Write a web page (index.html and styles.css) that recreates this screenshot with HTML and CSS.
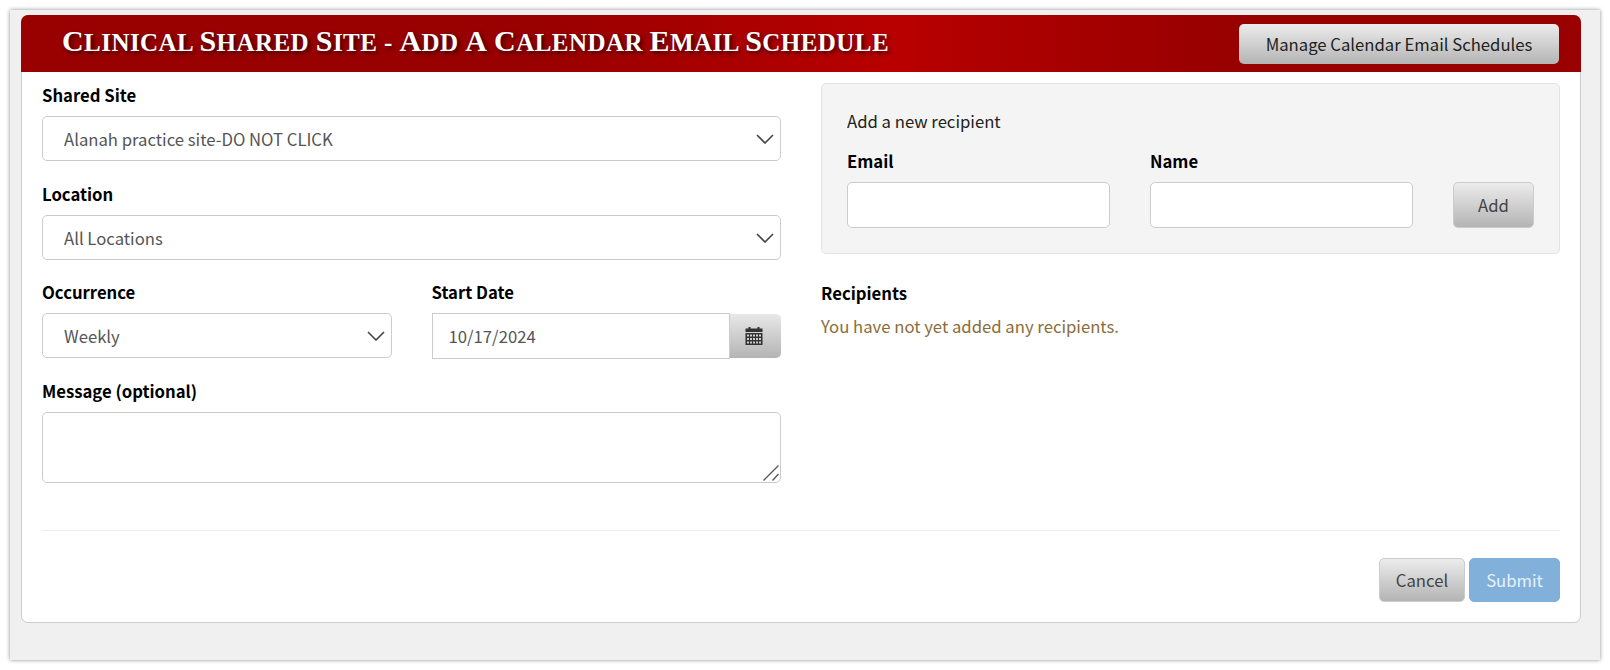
FILE: index.html
```html
<!DOCTYPE html>
<html lang="en">
<head>
    <meta charset="UTF-8">
    <title>Clinical Shared Site - Add A Calendar Email Schedule</title>
    <link rel="stylesheet" href="styles.css">
</head>
<body>
    <div class="frame">
        <div class="panel">
            <div class="panel-head">
                <h1><span class="cap">C</span>linical <span class="cap">S</span>hared <span class="cap">S</span>ite - <span class="cap">A</span>dd <span class="cap">A</span> <span class="cap">C</span>alendar <span class="cap">E</span>mail <span class="cap">S</span>chedule</h1>
                <button class="btn btn-manage" type="button">Manage Calendar Email Schedules</button>
            </div>
            <div class="panel-body">
                <div class="columns">
                    <div class="col">
                        <div class="field">
                            <label>Shared Site</label>
                            <div class="select-wrap">
                                <select><option>Alanah practice site-DO NOT CLICK</option></select>
                                <svg class="chevron" viewBox="0 0 18 10"><path d="M1 1l8 8 8-8"/></svg>
                            </div>
                        </div>
                        <div class="field">
                            <label>Location</label>
                            <div class="select-wrap">
                                <select><option>All Locations</option></select>
                                <svg class="chevron" viewBox="0 0 18 10"><path d="M1 1l8 8 8-8"/></svg>
                            </div>
                        </div>
                        <div class="field-row">
                            <div class="field">
                                <label>Occurrence</label>
                                <div class="select-wrap">
                                    <select><option>Weekly</option></select>
                                    <svg class="chevron" viewBox="0 0 18 10"><path d="M1 1l8 8 8-8"/></svg>
                                </div>
                            </div>
                            <div class="field">
                                <label>Start Date</label>
                                <div class="date-group">
                                    <input class="date-input" type="text" value="10/17/2024">
                                    <span class="date-addon">
                                        <svg class="calendar" viewBox="0 0 18 18">
                                            <rect x="3.5" y="0" width="2" height="3"/>
                                            <rect x="12.5" y="0" width="2" height="3"/>
                                            <rect x="0.5" y="1.5" width="17" height="3.5"/>
                                            <path fill-rule="evenodd" d="M.5 6h17v12H.5zM2 7.5v2h2v-2zm3 0v2h2v-2zm3 0v2h2v-2zm3 0v2h2v-2zm3 0v2h2v-2zM2 11v2h2v-2zm3 0v2h2v-2zm3 0v2h2v-2zm3 0v2h2v-2zm3 0v2h2v-2zM2 14.5v2h2v-2zm3 0v2h2v-2zm3 0v2h2v-2zm3 0v2h2v-2zm3 0v2h2v-2z"/>
                                        </svg>
                                    </span>
                                </div>
                            </div>
                        </div>
                        <div class="field">
                            <label>Message (optional)</label>
                            <div class="textarea-wrap">
                                <textarea></textarea>
                                <svg class="grip" viewBox="0 0 16 16"><path d="M0.5 15.5L15.5 0.5M9.5 15.5L15.5 9"/></svg>
                            </div>
                        </div>
                    </div>
                    <div class="col">
                        <div class="well">
                            <p class="well-title">Add a new recipient</p>
                            <div class="recipient-row">
                                <div class="recipient-field">
                                    <label>Email</label>
                                    <input class="text-input" type="text">
                                </div>
                                <div class="recipient-field">
                                    <label>Name</label>
                                    <input class="text-input" type="text">
                                </div>
                                <button class="btn btn-add" type="button">Add</button>
                            </div>
                        </div>
                        <div class="recipients">
                            <label>Recipients</label>
                            <p class="empty-note">You have not yet added any recipients.</p>
                        </div>
                    </div>
                </div>
                <div class="actions">
                    <button class="btn btn-cancel" type="button">Cancel</button>
                    <button class="btn btn-submit" type="button">Submit</button>
                </div>
            </div>
        </div>
    </div>
</body>
</html>
```

FILE: styles.css
```css
* {
    box-sizing: border-box;
}
html, body {
    margin: 0;
    height: 670px;
    overflow: hidden;
    background-color: #fff;
}
body {
    padding: 10px;
    font-family: "Noto Sans CJK SC", "Noto Sans", sans-serif;
    font-size: 16.7px;
    color: #555;
}
.frame {
    height: 650px;
    padding: 5px 19px 0 11px;
    background-color: #f0f0f0;
    box-shadow: 0 0 4px rgba(0, 0, 0, 0.45);
}
.panel {
    height: 608px;
    background-color: #fff;
    border: 1px solid #ccc;
    border-radius: 7px;
}
.panel-head {
    display: flex;
    align-items: center;
    justify-content: space-between;
    height: 57px;
    margin: -1px -1px 0;
    padding: 0 22px 0 41px;
    border-radius: 7px 7px 0 0;
    background: linear-gradient(to right, #990000 0%, #990000 33%, #b80000 56%, #990000 76%, #990000 100%);
}
h1 {
    margin: 0;
    padding-bottom: 5px;
    font-family: "Liberation Serif", serif;
    font-size: 25px;
    font-weight: bold;
    letter-spacing: 0.44px;
    text-transform: uppercase;
    color: #fff;
    text-shadow: 2px 2px 4px rgba(0, 0, 0, 0.7);
}
.cap {
    font-size: 30px;
}
.panel-body {
    padding: 0 20px;
}
.columns {
    display: flex;
    gap: 40px;
    height: 459px;
    border-bottom: 1px solid #eee;
}
.col {
    flex: 1;
    min-width: 0;
}
label {
    display: block;
    font-size: 16.7px;
    font-weight: bold;
    line-height: 24px;
    color: #000;
}
.field {
    flex: 1;
    min-width: 0;
    padding-top: 11px;
}
.field label {
    margin-bottom: 9px;
}
.field + .field {
    margin-top: 10px;
}
.field-row, .field-row + .field {
    margin-top: 9px;
}
.field-row {
    display: flex;
    gap: 40px;
}
.field-row .field + .field {
    margin-top: 0;
}
.select-wrap, .textarea-wrap {
    position: relative;
}
select {
    display: block;
    width: 100%;
    height: 45px;
    padding: 0 40px 0 21px;
    appearance: none;
    border: 1px solid #ccc;
    border-radius: 5px;
    background-color: #fff;
    font: inherit;
    color: #555;
}
.chevron {
    position: absolute;
    top: 18px;
    right: 7px;
    width: 18px;
    height: 10px;
    fill: none;
    stroke: #444;
    stroke-width: 1.6;
}
.date-group {
    display: flex;
    align-items: center;
}
.date-input {
    flex: 1;
    min-width: 0;
    height: 46px;
    padding: 0 16px;
    border: 1px solid #ccc;
    font: inherit;
    color: #555;
}
.date-addon {
    display: flex;
    align-items: center;
    justify-content: center;
    width: 51px;
    height: 44px;
    padding-right: 3px;
    border-radius: 0 5px 5px 0;
    background: linear-gradient(to bottom, #e8e8e8, #b4b4b4);
}
.calendar {
    width: 18px;
    height: 18px;
    fill: #333;
}
textarea {
    display: block;
    width: 100%;
    height: 71px;
    border: 1px solid #ccc;
    border-radius: 5px;
    font: inherit;
    resize: none;
}
.grip {
    position: absolute;
    right: 2px;
    bottom: 2px;
    width: 16px;
    height: 16px;
    fill: none;
    stroke: #555;
    stroke-width: 1.3;
}
.well {
    height: 171px;
    margin-top: 11px;
    padding: 24px 25px 0;
    border: 1px solid #e3e3e3;
    border-radius: 5px;
    background-color: #f4f4f4;
}
.well-title {
    margin: 0 0 15px;
    line-height: 26px;
    color: #222;
}
.recipient-row {
    display: flex;
    align-items: flex-end;
    gap: 40px;
}
.recipient-field {
    width: 263px;
}
.recipient-field label {
    margin-bottom: 9px;
}
.text-input {
    display: block;
    width: 100%;
    height: 46px;
    border: 1px solid #ccc;
    border-radius: 5px;
    background-color: #fff;
}
.recipients {
    margin-top: 27px;
}
.empty-note {
    margin: 8px 0 0;
    line-height: 26px;
    color: #8a6d3b;
}
.btn {
    border: 1px solid #ccc;
    border-radius: 5px;
    background: linear-gradient(to bottom, #ececec, #b4b4b4);
    font: inherit;
    color: #444;
}
.btn-manage {
    width: 320px;
    height: 40px;
    border: none;
    color: #222;
}
.btn-add {
    width: 81px;
    height: 46px;
}
.actions {
    display: flex;
    justify-content: flex-end;
    gap: 4px;
    padding-top: 27px;
}
.btn-cancel {
    width: 86px;
    height: 44px;
}
.btn-submit {
    width: 91px;
    height: 44px;
    border-color: #7fb0da;
    background: #81b1db;
    color: #e8f1f9;
}
```
